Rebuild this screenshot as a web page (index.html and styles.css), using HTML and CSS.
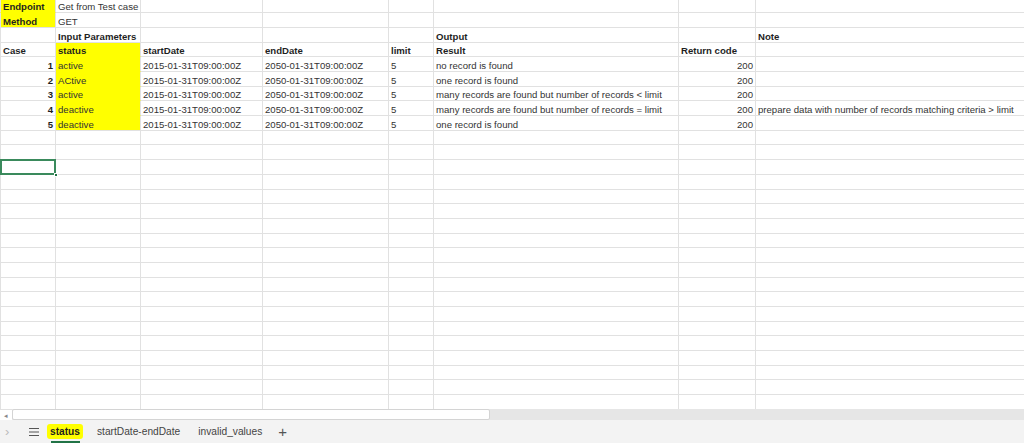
FILE: index.html
```html
<!DOCTYPE html>
<html lang="en">
<head>
    <meta charset="UTF-8">
    <title>status - Test cases</title>
    <link rel="stylesheet" href="styles.css">
</head>
<body>
    <div class="sheet">
        <table class="grid">
            <colgroup>
                <col class="col-a"><col class="col-b"><col class="col-c"><col class="col-d">
                <col class="col-e"><col class="col-f"><col class="col-g"><col class="col-h">
            </colgroup>
            <tr><td class="b fill join">Endpoint</td><td>Get from Test case</td><td></td><td></td><td></td><td></td><td></td><td></td></tr>
            <tr><td class="b fill">Method</td><td>GET</td><td></td><td></td><td></td><td></td><td></td><td></td></tr>
            <tr><td></td><td class="b">Input Parameters</td><td></td><td></td><td></td><td class="b">Output</td><td></td><td class="b">Note</td></tr>
            <tr><td class="b">Case</td><td class="b fill join">status</td><td class="b">startDate</td><td class="b">endDate</td><td class="b">limit</td><td class="b">Result</td><td class="b">Return code</td><td></td></tr>
            <tr><td class="b num">1</td><td class="fill join">active</td><td>2015-01-31T09:00:00Z</td><td>2050-01-31T09:00:00Z</td><td>5</td><td>no record is found</td><td class="num">200</td><td></td></tr>
            <tr><td class="b num">2</td><td class="fill join">ACtive</td><td>2015-01-31T09:00:00Z</td><td>2050-01-31T09:00:00Z</td><td>5</td><td>one record is found</td><td class="num">200</td><td></td></tr>
            <tr><td class="b num">3</td><td class="fill join">active</td><td>2015-01-31T09:00:00Z</td><td>2050-01-31T09:00:00Z</td><td>5</td><td>many records are found but number of records &lt; limit</td><td class="num">200</td><td></td></tr>
            <tr><td class="b num">4</td><td class="fill join">deactive</td><td>2015-01-31T09:00:00Z</td><td>2050-01-31T09:00:00Z</td><td>5</td><td>many records are found but number of records = limit</td><td class="num">200</td><td>prepare data with number of records matching criteria &gt; limit</td></tr>
            <tr><td class="b num">5</td><td class="fill">deactive</td><td>2015-01-31T09:00:00Z</td><td>2050-01-31T09:00:00Z</td><td>5</td><td>one record is found</td><td class="num">200</td><td></td></tr>
            <tr><td></td><td></td><td></td><td></td><td></td><td></td><td></td><td></td></tr>
            <tr><td></td><td></td><td></td><td></td><td></td><td></td><td></td><td></td></tr>
            <tr><td class="selected"></td><td></td><td></td><td></td><td></td><td></td><td></td><td></td></tr>
            <tr><td></td><td></td><td></td><td></td><td></td><td></td><td></td><td></td></tr>
            <tr><td></td><td></td><td></td><td></td><td></td><td></td><td></td><td></td></tr>
            <tr><td></td><td></td><td></td><td></td><td></td><td></td><td></td><td></td></tr>
            <tr><td></td><td></td><td></td><td></td><td></td><td></td><td></td><td></td></tr>
            <tr><td></td><td></td><td></td><td></td><td></td><td></td><td></td><td></td></tr>
            <tr><td></td><td></td><td></td><td></td><td></td><td></td><td></td><td></td></tr>
            <tr><td></td><td></td><td></td><td></td><td></td><td></td><td></td><td></td></tr>
            <tr><td></td><td></td><td></td><td></td><td></td><td></td><td></td><td></td></tr>
            <tr><td></td><td></td><td></td><td></td><td></td><td></td><td></td><td></td></tr>
            <tr><td></td><td></td><td></td><td></td><td></td><td></td><td></td><td></td></tr>
            <tr><td></td><td></td><td></td><td></td><td></td><td></td><td></td><td></td></tr>
            <tr><td></td><td></td><td></td><td></td><td></td><td></td><td></td><td></td></tr>
            <tr><td></td><td></td><td></td><td></td><td></td><td></td><td></td><td></td></tr>
            <tr><td></td><td></td><td></td><td></td><td></td><td></td><td></td><td></td></tr>
            <tr><td></td><td></td><td></td><td></td><td></td><td></td><td></td><td></td></tr>
            <tr><td></td><td></td><td></td><td></td><td></td><td></td><td></td><td></td></tr>
            <tr><td></td><td></td><td></td><td></td><td></td><td></td><td></td><td></td></tr>
        </table>
    </div>

    <!-- horizontal scroll bar -->
    <div class="hscroll">
        <div class="hscroll-btn">&#9666;</div>
        <div class="hscroll-track"></div>
    </div>

    <!-- sheet tabs -->
    <div class="tabs">
        <span class="tab-nav">&#8250;</span>
        <span class="tab-menu">
            <svg width="10" height="8" viewBox="0 0 10 8"><path d="M0 0.5h10M0 4h10M0 7.5h10" stroke="#555" stroke-width="1"/></svg>
        </span>
        <span class="tab active"><span class="tab-label">status</span></span>
        <span class="tab">startDate-endDate</span>
        <span class="tab wide">invalid_values</span>
        <span class="tab-add">+</span>
    </div>
</body>
</html>
```

FILE: styles.css
```css
body {
    margin: 0;
    height: 443px;
    overflow: hidden;
    display: flex;
    flex-direction: column;
    font-family: "Liberation Sans", Arial, sans-serif;
    background-color: #ffffff;
}

.sheet {
    height: 409px;
    overflow: hidden;
}

.grid {
    border-collapse: separate;
    border-spacing: 0;
    table-layout: fixed;
    width: 1060px;
    margin-top: -1.4px;
}

.col-a { width: 56px; }
.col-b { width: 85px; }
.col-c { width: 122px; }
.col-d { width: 126px; }
.col-e { width: 45px; }
.col-f { width: 245px; }
.col-g { width: 77px; }
.col-h { width: 304px; }

.grid td {
    box-sizing: border-box;
    height: 14.7px;
    padding: 0 2px;
    border-right: 1px solid #e1e1e1;
    border-bottom: 1px solid #e1e1e1;
    font-size: 9.6px;
    line-height: 10px;
    color: #333;
    white-space: nowrap;
    overflow: visible;
    vertical-align: bottom;
}

.grid td:first-child {
    border-left: 1px solid #e1e1e1;
}

.grid td.b {
    font-weight: bold;
    color: #1f1f1f;
}

.grid td.num {
    text-align: right;
}

.grid td.fill {
    background-color: #ffff00;
}

.grid td.join {
    border-bottom-color: #ffff00;
}

/* active cell */
.grid td.selected {
    position: relative;
}

.grid td.selected::before {
    content: "";
    position: absolute;
    left: -1px;
    top: -1px;
    right: -1px;
    bottom: -1px;
    border: 2px solid #3a8a5c;
}

.grid td.selected::after {
    content: "";
    position: absolute;
    right: -3px;
    bottom: -3px;
    width: 4px;
    height: 4px;
    background-color: #217346;
    border: 1px solid #fff;
    box-sizing: border-box;
}

.hscroll {
    height: 11px;
    display: flex;
    background-color: #e6e6e6;
}

.hscroll-btn {
    width: 12px;
    background-color: #fff;
    color: #888;
    font-size: 7px;
    line-height: 11px;
    text-align: center;
    border-top: 1px solid #e1e1e1;
    box-sizing: border-box;
}

.hscroll-track {
    width: 478px;
    background-color: #fff;
    border: 1px solid #d4d4d4;
    border-radius: 2px;
    box-sizing: border-box;
}

.tabs {
    height: 23px;
    background-color: #f3f3f3;
    display: flex;
    align-items: center;
    font-size: 10.2px;
    color: #444;
}

.tab-nav {
    width: 13px;
    margin-left: 5px;
    color: #bbb;
    font-size: 13px;
    line-height: 13px;
}

.tab-menu {
    width: 10px;
    height: 8px;
    margin-left: 11px;
    display: flex;
}

.tab {
    position: relative;
    height: 23px;
    display: flex;
    align-items: center;
    margin-left: 14px;
}

.tab.wide {
    margin-left: 18px;
}

.tab.active {
    margin-left: 8px;
}

.tab.active .tab-label {
    background-color: #ffff00;
    color: #1f1f1f;
    font-weight: bold;
    padding: 1px 3px;
    border-radius: 3px;
    line-height: 13px;
}

.tab.active::after {
    content: "";
    position: absolute;
    left: 4px;
    right: 3px;
    bottom: 0;
    height: 2px;
    background-color: #217346;
}

.tab-add {
    margin-left: 16px;
    font-size: 15px;
    color: #555;
}
```
